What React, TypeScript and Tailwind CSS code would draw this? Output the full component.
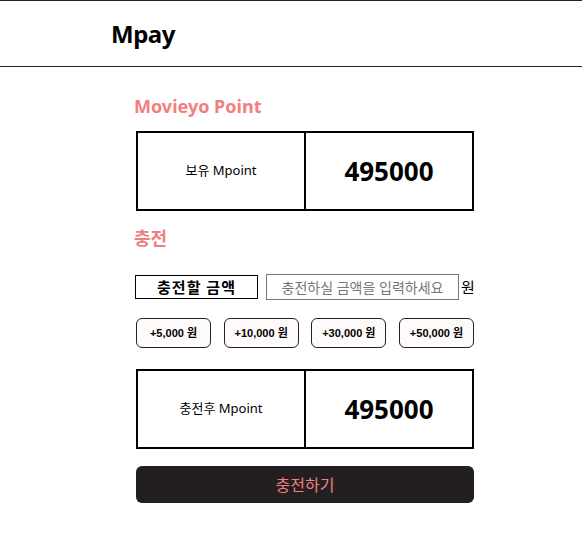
const KR = "font-['Noto_Sans','Noto_Sans_CJK_KR',sans-serif]";

const AMOUNTS = ['+5,000 원', '+10,000 원', '+30,000 원', '+50,000 원'];

function PointBox({ label, value }: { label: string; value: string }) {
  return (
    <div className="ml-[2px] flex h-[80px] w-[338px] border-2 border-black">
      <div className="flex flex-1 items-center justify-center text-[13px] text-black">{label}</div>
      <div className="flex flex-1 items-center justify-center border-l-2 border-black text-[26px] font-bold text-black">
        {value}
      </div>
    </div>
  );
}

export default function App() {
  return (
    <div className={`min-h-screen bg-white ${KR}`}>
      {/* HEADER */}
      <header className="flex h-[67px] items-center border-t border-b border-[#222]">
        <span className="pl-[111px] text-[24px] font-bold tracking-[-0.5px] text-black">Mpay</span>
      </header>

      <main className="ml-[134px] w-[360px]">
        <h2 className="mt-[26px] text-[18px] font-bold leading-[26px] text-[#f08080]">Movieyo Point</h2>
        <div className="mt-[12px]">
          <PointBox label="보유 Mpoint" value="495000" />
        </div>

        <h2 className="mt-[14px] text-[18px] font-bold leading-[26px] text-[#f08080]">충전</h2>

        {/* 금액 입력 */}
        <div className="mt-[23px] flex items-center">
          <div className="ml-[1px] flex h-[24px] w-[123px] shrink-0 items-center justify-center border border-black text-[15px] font-bold tracking-[1px] text-black">
            충전할 금액
          </div>
          <input
            className="ml-[8px] h-[26px] w-[193px] shrink-0 border border-[#777] text-center text-[14px] text-black outline-none placeholder:text-[#777]"
            placeholder="충전하실 금액을 입력하세요"
          />
          <span className="ml-[2px] shrink-0 text-[15px] text-black">원</span>
        </div>

        <div className="mt-[18px] ml-[2px] flex w-[338px] justify-between">
          {AMOUNTS.map(a => (
            <button
              key={a}
              className="h-[30px] w-[75px] rounded-[6px] border border-[#222] bg-[#fffafa] font-['Liberation_Sans','Noto_Sans_CJK_KR',sans-serif] text-[11px] font-bold text-black"
            >
              {a}
            </button>
          ))}
        </div>

        <div className="mt-[21px]">
          <PointBox label="충전후 Mpoint" value="495000" />
        </div>

        <button className="mt-[17px] ml-[2px] h-[37px] w-[338px] rounded-[6px] bg-[#231f20] text-[16px] text-[#f08080]">
          충전하기
        </button>
      </main>
    </div>
  );
}
